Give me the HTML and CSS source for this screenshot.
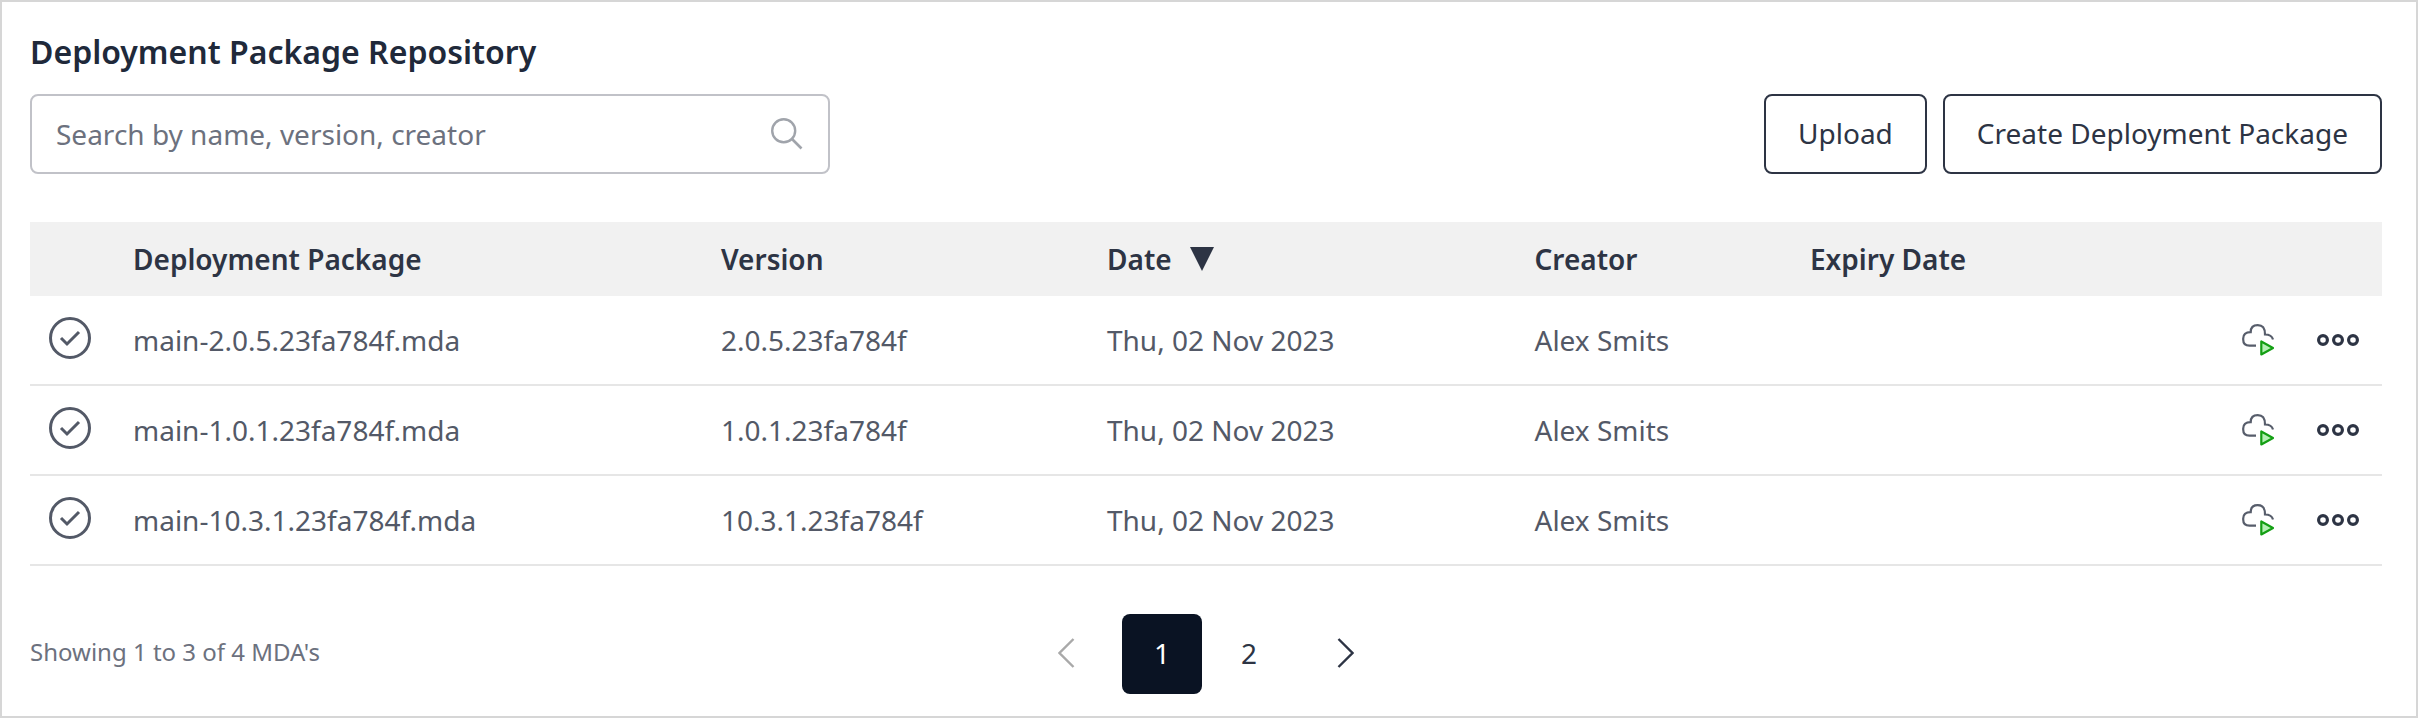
FILE: index.html
```
<!DOCTYPE html>
<html lang="en">
<head>
<meta charset="utf-8">
<title>Deployment Package Repository</title>
<link rel="stylesheet" href="styles.css">
</head>
<body>
<svg class="sprite" aria-hidden="true">
  <symbol id="check" viewBox="0 0 42 42"><circle cx="21" cy="21" r="19.500" fill="none" stroke="currentColor" stroke-width="3"/><path d="M12 21l6 6L30 15" fill="none" stroke="currentColor" stroke-width="3"/></symbol>
  <symbol id="deploy" viewBox="0 0 32 32"><path d="M14 21.700H7.500C3.500 21.700 1.200 19.500 1.200 15.500V14.500C1.200 10.500 3.500 8.200 8.700 8.200C8.700 3.500 10.500 1.200 15.700 1.200C20.700 1.200 23 3.500 23 10.500C27.500 10.500 30 11.500 31 15.500" fill="none" stroke="#575d6b" stroke-width="2.200"/><path d="M19.300 17.500V30.500L31 24z" fill="#b5f0b5" stroke="#149f14" stroke-width="2.200" stroke-linejoin="round"/></symbol>
  <symbol id="dots" viewBox="0 0 42 12"><g fill="none" stroke="currentColor" stroke-width="3.200"><circle cx="6" cy="6" r="4.400"/><circle cx="21" cy="6" r="4.400"/><circle cx="36" cy="6" r="4.400"/></g></symbol>
</svg>
<main class="panel">
  <h1 class="title">Deployment Package Repository</h1>
  <div class="toolbar">
    <label class="search">
      <input class="search-input" type="text" placeholder="Search by name, version, creator">
      <svg class="search-icon" viewBox="0 0 32 32"><circle cx="12.700" cy="12.700" r="11.500" fill="none" stroke="currentColor" stroke-width="2.400"/><path d="M21 21L30.500 30.500" stroke="currentColor" stroke-width="2.600"/></svg>
    </label>
    <div class="actions">
      <button class="button">Upload</button>
      <button class="button">Create Deployment Package</button>
    </div>
  </div>
  <div class="table">
    <div class="row head"><span></span><span>Deployment Package</span><span>Version</span><span class="sort">Date <svg class="sort-icon" viewBox="0 0 24 24"><path d="M0 0H24L12 24z" fill="currentColor"/></svg></span><span>Creator</span><span>Expiry Date</span><span></span></div>
    <div class="row"><svg class="check"><use href="#check"/></svg><span>main-2.0.5.23fa784f.mda</span><span>2.0.5.23fa784f</span><span>Thu, 02 Nov 2023</span><span>Alex Smits</span><span></span><span class="tools"><svg class="deploy"><use href="#deploy"/></svg><svg class="dots"><use href="#dots"/></svg></span></div>
    <div class="row"><svg class="check"><use href="#check"/></svg><span>main-1.0.1.23fa784f.mda</span><span>1.0.1.23fa784f</span><span>Thu, 02 Nov 2023</span><span>Alex Smits</span><span></span><span class="tools"><svg class="deploy"><use href="#deploy"/></svg><svg class="dots"><use href="#dots"/></svg></span></div>
    <div class="row"><svg class="check"><use href="#check"/></svg><span>main-10.3.1.23fa784f.mda</span><span>10.3.1.23fa784f</span><span>Thu, 02 Nov 2023</span><span>Alex Smits</span><span></span><span class="tools"><svg class="deploy"><use href="#deploy"/></svg><svg class="dots"><use href="#dots"/></svg></span></div>
  </div>
  <footer class="footer">
    <span class="summary">Showing 1 to 3 of 4 MDA's</span>
    <nav class="pager">
      <svg class="arrow disabled" viewBox="0 0 17 30"><path d="M15.500 1L1.500 15L15.500 29" fill="none" stroke="currentColor" stroke-width="2.400"/></svg>
      <span class="pages"><span class="page current">1</span><span class="page">2</span></span>
      <svg class="arrow" viewBox="0 0 17 30"><path d="M1.500 1L15.500 15L1.500 29" fill="none" stroke="currentColor" stroke-width="2.400"/></svg>
    </nav>
  </footer>
</main>
</body>
</html>
```
FILE: styles.css
```
* { box-sizing: border-box; }
body {
  margin: 0;
  background: #fff;
  font: 28px/38px "Noto Sans", sans-serif;
  color: #2d3444;
}
.sprite { display: none; }
.panel {
  display: flex;
  flex-direction: column;
  height: 718px;
  padding: 29px 34px 22px 28px;
  border: 2px solid #d6d6d6;
}
.title {
  margin: 0 0 21px;
  font-size: 32px;
  line-height: 42px;
  font-weight: 600;
  color: #20293a;
}
.toolbar {
  display: flex;
  justify-content: space-between;
  height: 80px;
  margin-bottom: 48px;
}
.search {
  display: flex;
  align-items: center;
  width: 800px;
  padding: 0 25px 0 24px;
  border: 2px solid #c1c2c8;
  border-radius: 8px;
}
.search-input {
  flex: 1;
  padding: 0;
  border: 0;
  outline: 0;
  background: none;
  font: inherit;
}
.search-input::placeholder { color: #6c717e; opacity: 1; }
.search-icon { width: 32px; height: 32px; color: #a0a4ab; }
.actions { display: flex; gap: 16px; }
.button {
  padding: 0 32px 2px;
  border: 2px solid #2d3444;
  border-radius: 8px;
  background: #fff;
  color: inherit;
  font: inherit;
}
.row {
  display: grid;
  grid-template-columns: 103px 588px 386px 427.5px 275.5px 400px 1fr;
  align-items: center;
  height: 90px;
  border-bottom: 2px solid #e6e6e6;
  color: #535967;
}
.head {
  height: 74px;
  border: 0;
  background: #f1f1f1;
  color: #2d3444;
  font-weight: 600;
}
.sort { display: flex; align-items: center; gap: 18px; }
.sort-icon { width: 24px; height: 24px; margin-bottom: 1px; }
.check { width: 42px; height: 42px; margin: 0 0 4px 19px; }
.tools { display: flex; align-items: center; justify-content: flex-end; gap: 43px; padding-right: 23px; }
.deploy { width: 32px; height: 32px; }
.dots { width: 42px; height: 12px; color: #2d3444; }
.footer {
  display: grid;
  grid-template-columns: 1028px auto 1fr;
  align-items: center;
  height: 80px;
  margin-top: 48px;
}
.summary { font-size: 24px; line-height: 32px; color: #6c717e; padding-bottom: 4px; }
.pager { display: flex; align-items: center; }
.pages { display: flex; gap: 7px; margin: 0 48px 0 47px; }
.page { width: 80px; height: 80px; line-height: 78px; text-align: center; }
.current { border-radius: 8px; background: #0a1323; color: #fff; }
.arrow { width: 17px; height: 30px; margin-bottom: 2px; }
.disabled { color: #a9a9a9; }
```
